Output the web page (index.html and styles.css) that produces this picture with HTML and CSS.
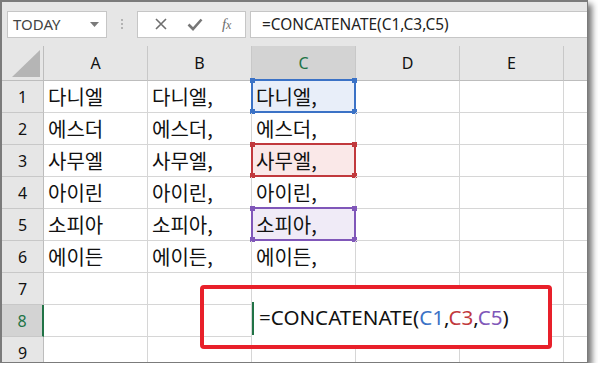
FILE: index.html
```html
<!DOCTYPE html>
<html lang="ko">
<head>
    <meta charset="UTF-8">
    <title>CONCATENATE</title>
    <link rel="stylesheet" href="styles.css">
</head>
<body>
    <div class="window">
        <div class="toolbar">
            <div class="namebox">
                <span>TODAY</span>
                <svg class="caret" width="9" height="5" viewBox="0 0 9 5"><path d="M0 0H9L4.5 5Z" fill="#7a7a7a"/></svg>
            </div>
            <div class="grip"><i></i><i></i><i></i></div>
            <div class="fxbtns">
                <svg width="14" height="14" viewBox="0 0 14 14"><path d="M2 2L12 12M12 2L2 12" stroke="#6e6e6e" stroke-width="1.6"/></svg>
                <svg width="16" height="14" viewBox="0 0 16 14"><path d="M1.5 7.5L6 12L14.5 2.5" stroke="#777" stroke-width="2.6" fill="none"/></svg>
                <span class="fx">f<sub>x</sub></span>
            </div>
            <div class="formula">=CONCATENATE(C1,C3,C5)</div>
        </div>

        <div class="sheet">
            <div class="corner"><svg width="28" height="27" viewBox="0 0 28 27"><path d="M28 0V27H0Z" fill="#b5b5b5"/></svg></div>
            <div class="colhead">A</div>
            <div class="colhead">B</div>
            <div class="colhead active">C</div>
            <div class="colhead">D</div>
            <div class="colhead">E</div>
            <div class="colhead last"></div>

            <div class="rowhead">1</div>
            <div class="cell">다니엘</div>
            <div class="cell">다니엘,</div>
            <div class="cell ref blue">다니엘,<div class="frame"><i class="tl"></i><i class="tr"></i><i class="bl"></i><i class="br"></i></div></div>
            <div class="cell"></div><div class="cell"></div><div class="cell last"></div>

            <div class="rowhead">2</div>
            <div class="cell">에스더</div>
            <div class="cell">에스더,</div>
            <div class="cell">에스더,</div>
            <div class="cell"></div><div class="cell"></div><div class="cell last"></div>

            <div class="rowhead">3</div>
            <div class="cell">사무엘</div>
            <div class="cell">사무엘,</div>
            <div class="cell ref red">사무엘,<div class="frame"><i class="tl"></i><i class="tr"></i><i class="bl"></i><i class="br"></i></div></div>
            <div class="cell"></div><div class="cell"></div><div class="cell last"></div>

            <div class="rowhead">4</div>
            <div class="cell">아이린</div>
            <div class="cell">아이린,</div>
            <div class="cell">아이린,</div>
            <div class="cell"></div><div class="cell"></div><div class="cell last"></div>

            <div class="rowhead">5</div>
            <div class="cell">소피아</div>
            <div class="cell">소피아,</div>
            <div class="cell ref purple">소피아,<div class="frame"><i class="tl"></i><i class="tr"></i><i class="bl"></i><i class="br"></i></div></div>
            <div class="cell"></div><div class="cell"></div><div class="cell last"></div>

            <div class="rowhead">6</div>
            <div class="cell">에이든</div>
            <div class="cell">에이든,</div>
            <div class="cell">에이든,</div>
            <div class="cell"></div><div class="cell"></div><div class="cell last"></div>

            <div class="rowhead">7</div>
            <div class="cell"></div><div class="cell"></div><div class="cell"></div>
            <div class="cell"></div><div class="cell"></div><div class="cell last"></div>

            <div class="rowhead active">8</div>
            <div class="cell"></div><div class="cell"></div><div class="cell"></div>
            <div class="cell"></div><div class="cell"></div><div class="cell last"></div>

            <div class="rowhead">9</div>
            <div class="cell"></div><div class="cell"></div><div class="cell"></div>
            <div class="cell"></div><div class="cell"></div><div class="cell last"></div>
        </div>

        <!-- 편집 중인 C8 셀 강조 -->
        <div class="callout">
            <div class="editor">
                <span class="cursor"></span>
                <span class="text">=CONCATENATE(<b class="c1">C1</b>,<b class="c3">C3</b>,<b class="c5">C5</b>)</span>
            </div>
        </div>
    </div>
</body>
</html>
```

FILE: styles.css
```css
body {
    margin: 0;
    background: #fff;
    font-family: "Noto Sans", "Noto Sans CJK KR", sans-serif;
}
.window {
    position: relative;
    width: 588px;
    height: 363px;
    box-sizing: border-box;
    border: 2px solid #7b7b7b;
    border-right-width: 1px;
    border-bottom-width: 1px;
    background: #e6e6e6;
    overflow: hidden;
    box-shadow: 4px 4px 6px rgba(0,0,0,0.55);
}
.toolbar {
    display: flex;
    align-items: center;
    height: 44px;
    padding-left: 5px;
}
.namebox {
    display: flex;
    align-items: center;
    justify-content: space-between;
    width: 100px;
    height: 27px;
    box-sizing: border-box;
    border: 1px solid #c6c6c6;
    background: #fff;
    padding: 0 7px 0 5px;
    font-size: 15px;
    color: #444;
}
.grip {
    display: flex;
    flex-direction: column;
    gap: 2px;
    margin: 0 14px;
}
.grip i {
    width: 2px;
    height: 2px;
    background: #b3b3b3;
}
.fxbtns {
    display: flex;
    align-items: center;
    justify-content: space-around;
    width: 109px;
    height: 27px;
    box-sizing: border-box;
    border: 1px solid #c6c6c6;
    background: #fff;
    padding: 0 4px 0 6px;
}
.fx {
    font-family: "Liberation Serif", serif;
    font-style: italic;
    font-size: 15px;
    color: #6e6e6e;
}
.fx sub {
    font-size: 12px;
    vertical-align: 0;
}
.formula {
    flex: 1;
    height: 27px;
    box-sizing: border-box;
    margin-left: 4px;
    border: 1px solid #c6c6c6;
    border-right: none;
    background: #fff;
    padding-left: 11px;
    font-size: 15.4px;
    line-height: 25px;
    color: #222;
}

.sheet {
    display: grid;
    grid-template-columns: 42px repeat(5, 104px) 1fr;
    grid-template-rows: 35px repeat(9, 32px);
    background: #fff;
}
.corner {
    display: flex;
    align-items: flex-end;
    justify-content: flex-end;
    padding: 0 3px 3px 0;
    background: #e6e6e6;
    border-right: 1px solid #bdbdbd;
    border-bottom: 1px solid #bdbdbd;
}
.colhead {
    display: flex;
    align-items: center;
    justify-content: center;
    background: #e6e6e6;
    border-right: 1px solid #c8c8c8;
    border-bottom: 1px solid #bdbdbd;
    font-size: 16px;
    color: #111;
}
.colhead.active {
    background: #d3d3d3;
    color: #217346;
    border-bottom: 2px solid #217346;
}
.colhead.last, .cell.last {
    border-right: none;
}
.rowhead {
    display: flex;
    align-items: center;
    justify-content: center;
    background: #e6e6e6;
    border-right: 1px solid #bdbdbd;
    border-bottom: 1px solid #c8c8c8;
    font-size: 16px;
    color: #111;
}
.rowhead.active {
    background: #d3d3d3;
    color: #217346;
    border-right: 2px solid #217346;
}
.cell {
    position: relative;
    display: flex;
    align-items: center;
    padding-left: 4px;
    border-right: 1px solid #d6d6d6;
    border-bottom: 1px solid #d6d6d6;
    font-family: "Noto Sans CJK KR", sans-serif;
    font-size: 20px;
    color: #111;
    white-space: nowrap;
}

/* 수식에서 참조하는 셀 */
.ref .frame {
    position: absolute;
    top: -2px;
    left: -1px;
    right: -1px;
    bottom: -1px;
    border: 2px solid;
}
.ref .frame i {
    position: absolute;
    width: 5px;
    height: 5px;
}
.ref .tl { top: -3px; left: -3px; }
.ref .tr { top: -3px; right: -3px; }
.ref .bl { bottom: -3px; left: -3px; }
.ref .br { bottom: -3px; right: -3px; }
.blue { background: #e8eef9; }
.blue .frame { border-color: #3b72c6; }
.blue .frame i { background: #3b72c6; }
.red { background: #fae8e8; }
.red .frame { border-color: #c1393d; }
.red .frame i { background: #c1393d; }
.purple { background: #f0ebf7; }
.purple .frame { border-color: #8057b9; }
.purple .frame i { background: #8057b9; }

.callout {
    position: absolute;
    left: 198px;
    top: 283px;
    width: 352px;
    height: 64px;
    box-sizing: border-box;
    border: 4px solid #e8202a;
    border-radius: 4px;
    padding: 0 0 0 48px;
}
.editor {
    display: flex;
    align-items: center;
    height: 100%;
    background: #fff;
}
.cursor {
    width: 2px;
    height: 33px;
    margin: 2px 5px 0 0;
    background: #217346;
}
.text {
    font-size: 20.6px;
    color: #111;
}
.text b {
    font-weight: normal;
}
.c1 { color: #3b72c6; }
.c3 { color: #c1393d; }
.c5 { color: #8057b9; }
```
